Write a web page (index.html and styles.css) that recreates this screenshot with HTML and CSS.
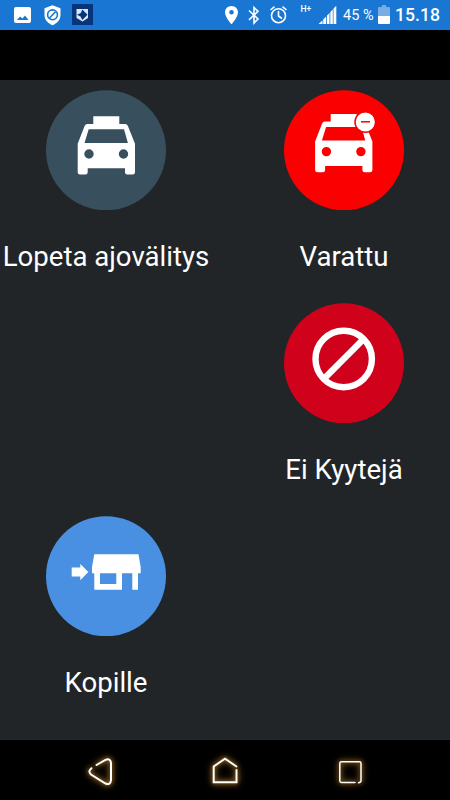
FILE: index.html
```html
<!DOCTYPE html>
<html lang="fi">
<head>
<meta charset="utf-8">
<title>Ajovälitys</title>
<link rel="stylesheet" href="styles.css">
</head>
<body>
<div class="screen">
  <header class="status">
    <svg class="status-left" width="100" height="30" viewBox="0 0 100 30">
      <path fill="#fff" fill-rule="evenodd" d="M16 7H29Q31 7 31 9V21Q31 23 29 23H16Q14 23 14 21V9Q14 7 16 7ZM17 20H28.500L25 15.500L22.500 18.500L20 16.500Z"/>
      <path fill="#fff" d="M52.500 5.200L60.500 8.200V15C60.500 20 57 23.500 52.500 25.200C48 23.500 44.500 20 44.500 15V8.200Z"/>
      <circle cx="52.500" cy="14.800" r="4.900" fill="none" stroke="#1976d2" stroke-width="1.600"/>
      <path d="M49.500 18L55.500 11.700" stroke="#1976d2" stroke-width="1.600"/>
      <path fill="#06357c" d="M72 4H93V25H72Z"/>
      <path fill="#dfe6f2" d="M76.500 9H88V18L82.500 21.500L76.500 18Z"/>
      <path fill="#06357c" d="M82.300 9.500L87.500 14.700L82.300 20L80.500 16.500L77 14.800L80.800 13Z"/>
    </svg>
    <svg class="status-icons" width="122" height="30" viewBox="218 0 122 30">
      <path fill="#fff" fill-rule="evenodd" d="M231.500 6C227.800 6 225 8.800 225 12.400C225 17 231.500 24.300 231.500 24.300S238 17 238 12.400C238 8.800 235.200 6 231.500 6ZM231.500 10A2.300 2.300 0 1 1 231.500 14.600A2.300 2.300 0 1 1 231.500 10Z"/>
      <path fill="none" stroke="#fff" stroke-width="1.600" d="M249 10.500L258 19L254 23V7.500L258 11.300L249 19.800"/>
      <circle cx="278.500" cy="15.700" r="7" fill="none" stroke="#fff" stroke-width="1.600"/>
      <path fill="none" stroke="#fff" stroke-width="1.600" d="M278.500 11V16L282 18.500M270.500 10L274.500 6.700M282.500 6.700L286.500 10"/>
      <text class="network" x="300.500" y="11.500">H+</text>
      <path fill="#fff" d="M318.500 24L322.500 20.500V24ZM323.200 19.500L326.200 16.500V24H323.200ZM327 15.500L329.500 13V24H327ZM330.300 12L332.800 9.500V24H330.300ZM333.500 8.500L336.300 5.700V24H333.500Z"/>
    </svg>
    <span class="percent">45 %</span>
    <svg class="battery" width="12" height="30" viewBox="0 0 12 30">
      <path fill="#75ade4" d="M4 5H8V7H11Q12 7 12 8V16H0V8Q0 7 1 7H4Z"/>
      <path fill="#fff" d="M0 16H12V23Q12 24 11 24H1Q0 24 0 23Z"/>
    </svg>
    <time class="clock">15.18</time>
  </header>
  <div class="title-bar"></div>
  <main class="actions">
    <div class="action">
      <svg class="disc" viewBox="0 0 120 120">
        <circle cx="60" cy="60" r="60" fill="#384f5e"/>
        <g id="taxi">
          <path fill="#fff" fill-rule="evenodd" d="M47.300 26H73.300V33.700H79Q81.300 33.700 82 36L89 53.500V82Q89 84.300 86.700 84.300H81.300Q79 84.300 79 82V78H41.700V82Q41.700 84.300 39.400 84.300H34Q31.700 84.300 31.700 82V53.500L38.500 36Q39.300 33.700 41.500 33.700H47.300ZM42.700 39L38.500 52.700H81.900L78 39ZM43 59A4.700 4.700 0 1 0 43 68.400A4.700 4.700 0 1 0 43 59ZM77.500 59A4.700 4.700 0 1 0 77.500 68.400A4.700 4.700 0 1 0 77.500 59Z"/>
        </g>
      </svg>
      <span class="label">Lopeta ajovälitys</span>
    </div>
    <div class="action right">
      <svg class="disc" viewBox="0 0 120 120">
        <circle cx="60" cy="60" r="60" fill="#fa0000"/>
        <use href="#taxi" transform="translate(-.6 -2.400)"/>
        <circle cx="81.300" cy="31.700" r="10.300" fill="#fff" stroke="#fa0000" stroke-width="1.500"/>
        <path d="M77 31.500H86" stroke="#fa0000" stroke-width="1.500"/>
      </svg>
      <span class="label">Varattu</span>
    </div>
    <div class="action right">
      <svg class="disc" viewBox="0 0 120 120">
        <circle cx="60" cy="60" r="60" fill="#d0021b"/>
        <circle cx="59.700" cy="55.700" r="28.200" fill="none" stroke="#fff" stroke-width="6.400"/>
        <path d="M40 75.400L79.400 36" stroke="#fff" stroke-width="6.400"/>
      </svg>
      <span class="label">Ei Kyytejä</span>
    </div>
    <div class="action">
      <svg class="disc" viewBox="0 0 120 120">
        <circle cx="60" cy="60" r="60" fill="#4990e2"/>
        <path fill="#fff" fill-rule="evenodd" d="M48.300 38H92.500L94.700 51V57H92V73.500H86.300V57H76V73.500H48.300V57H46V51ZM54 57V67.700H70.300V57Z"/>
        <path fill="#fff" d="M25.700 51.300H34.300V47.700L42.300 55.700L34.300 64V60.300H25.700Z"/>
      </svg>
      <span class="label">Kopille</span>
    </div>
  </main>
  <nav class="nav">
    <svg width="60" height="60" viewBox="70 0 60 60">
      <path class="neon" d="M96.500 25L105 20.200Q110.500 17.500 111 23V40Q110.500 45.500 105.500 43.500L91 34.500Q87.500 31.500 91.500 28.200"/>
    </svg>
    <svg width="60" height="60" viewBox="195 0 60 60">
      <path class="neon" d="M236.500 26.500L225 18.700L213.700 26.500V42.300H236.500V30"/>
    </svg>
    <svg width="60" height="60" viewBox="320 0 60 60">
      <path class="neon thin" d="M355 42.500H341.500Q339.800 42.500 339.800 40.800V23.500Q339.800 21.800 341.500 21.800H359.300Q361 21.800 361 23.500V40.800Q361 42.500 358.500 42.700"/>
    </svg>
  </nav>
</div>
</body>
</html>
```
FILE: styles.css
```css
body {
  margin: 0;
  background: #000;
}

.screen {
  width: 450px;
  height: 800px;
  display: flex;
  flex-direction: column;
  overflow: hidden;
  font-family: Roboto, "Liberation Sans", sans-serif;
  color: #fff;
}

.status {
  height: 30px;
  display: flex;
  align-items: center;
  background: #1976d2;
}

.status-left {
  margin-right: auto;
}

.network {
  font-family: Roboto, sans-serif;
  font-size: 8.5px;
  font-weight: 500;
  fill: #fff;
}

.percent {
  width: 35px;
  margin-left: 3px;
  font-size: 14.5px;
  line-height: 32px;
  padding-top: 2px;
  white-space: nowrap;
}

.clock {
  width: 55px;
  margin-left: 5px;
  box-sizing: border-box;
  font-size: 17.6px;
  font-weight: 500;
  line-height: 32px;
}

.title-bar {
  height: 50px;
  background: #000;
}

.actions {
  height: 650px;
  padding-top: 10px;
  display: grid;
  grid-template-columns: 212px 212px;
  grid-template-rows: repeat(3, 213px);
  column-gap: 26px;
  background: #212528;
}

.action {
  display: flex;
  flex-direction: column;
  align-items: center;
}

.right {
  grid-column: 2;
}

.disc {
  width: 120px;
  height: 120px;
  padding-top: 0.3px;
}

.label {
  margin-top: 29.7px;
  font-size: 27.6px;
  line-height: 34px;
  white-space: nowrap;
}

.nav {
  height: 60px;
  padding: 0 70px;
  display: flex;
  justify-content: space-between;
  background: #000;
}

.neon {
  fill: none;
  stroke: #fff;
  stroke-width: 2;
  stroke-linecap: round;
  filter: drop-shadow(0 0 2px #a8752a) drop-shadow(0 0 3px #80571c);
}

.thin {
  stroke-width: 1.5;
}
```
